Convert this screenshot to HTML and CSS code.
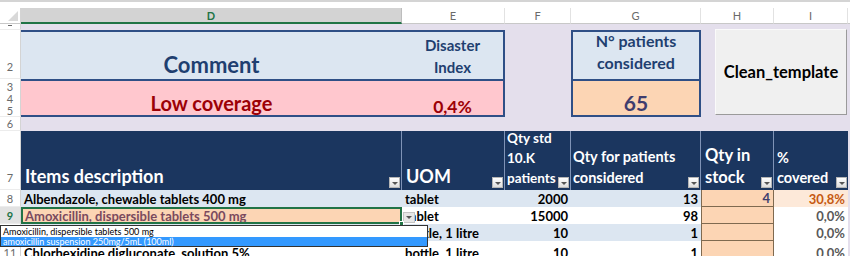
FILE: index.html
```html
<!DOCTYPE html>
<html lang="en">
<head>
<meta charset="utf-8">
<title>Sheet</title>
<link rel="stylesheet" href="styles.css">
</head>
<body>
<div class="app">
  <div class="chrome-top"></div>
  <div class="colheads">
    <div class="corner"><span class="corner-tri"></span></div>
    <div class="ch sel">D</div>
    <div class="ch">E</div>
    <div class="ch">F</div>
    <div class="ch">G</div>
    <div class="ch">H</div>
    <div class="ch">I</div>
    <div class="ch end"></div>
  </div>

  <div class="top">
    <div class="rn rn-one"><span class="rn-dash"></span></div>
    <div class="rn rn-pad">2</div>
    <div class="rn rn-stack"><span>3</span><span>4</span><span>5</span></div>
    <div class="rn">6</div>

    <div class="kpi">
      <div class="kc k-comment">Comment</div>
      <div class="kc k-index">Disaster<br>Index</div>
      <div class="kc k-low">Low coverage</div>
      <div class="kc k-val">0,4%</div>
    </div>

    <div class="pat">
      <div class="kc p-label">N° patients<br>considered</div>
      <div class="kc p-val">65</div>
    </div>

    <button class="clean">Clean_template</button>
  </div>

  <div class="table">
    <div class="rn rn-head">7</div>
    <div class="th th-items">Items description<span class="fb"></span></div>
    <div class="th th-uom">UOM<span class="fb"></span></div>
    <div class="th th-std">Qty std<br>10.K<br>patients<span class="fb"></span></div>
    <div class="th th-pat">Qty for patients<br>considered<span class="fb"></span></div>
    <div class="th th-stock">Qty in<br>stock<span class="fb"></span></div>
    <div class="th th-cov">%<br>covered<span class="fb"></span></div>
    <div class="gap"></div>

    <div class="rn">8</div>
    <div class="td blue">Albendazole, chewable tablets 400 mg</div>
    <div class="td blue">tablet</div>
    <div class="td blue num">2000</div>
    <div class="td blue num">13</div>
    <div class="td stock num">4</div>
    <div class="td pct hi num">30,8%</div>
    <div class="gap"></div>

    <div class="rn rn-sel">9</div>
    <div class="td selcell">Amoxicillin, dispersible tablets 500 mg</div>
    <div class="td white">tablet</div>
    <div class="td white num">15000</div>
    <div class="td white num">98</div>
    <div class="td stock num"></div>
    <div class="td pct num">0,0%</div>
    <div class="gap"></div>

    <div class="rn rn-hidden"></div>
    <div class="td blue"></div>
    <div class="td blue">bottle, 1 litre</div>
    <div class="td blue num">10</div>
    <div class="td blue num">1</div>
    <div class="td stock num"></div>
    <div class="td pct num">0,0%</div>
    <div class="gap"></div>

    <div class="rn rn-low">11</div>
    <div class="td white low">Chlorhexidine digluconate, solution 5%</div>
    <div class="td white low">bottle, 1 litre</div>
    <div class="td white num low">10</div>
    <div class="td white num low">1</div>
    <div class="td stock num"></div>
    <div class="td pct num low">0,0%</div>
    <div class="gap"></div>

    <span class="dd-arrow"></span>
    <span class="fill-handle"></span>
    <div class="dd">
      <div class="opt">Amoxicillin, dispersible tablets 500 mg</div>
      <div class="opt opt-hl">amoxicillin suspension 250mg/5mL (100ml)</div>
    </div>
  </div>
</div>
</body>
</html>
```

FILE: styles.css
```css
:root {
  --cols: 21px 381px 103px 66px 130px 73px 74px 2px;
  --navy: #1b365f;
  --lav: #e4dfec;
  --lblue: #dce6f1;
  --pink: #ffc7ce;
  --orange: #fcd5b4;
  --kborder: #2f4f86;
}

* { box-sizing: border-box; }

html, body {
  margin: 0;
  padding: 0;
}

body {
  width: 850px;
  height: 256px;
  overflow: hidden;
  background: #fff;
  font-family: Lato, "Liberation Sans", sans-serif;
}

.chrome-top {
  height: 2px;
  background: #d4d4d4;
  margin-bottom: 6px;
}

/* column headers */
.colheads {
  display: grid;
  grid-template-columns: var(--cols);
  height: 16px;
}

.corner {
  position: relative;
  background: #fff;
  border-right: 1px solid #d4d4d4;
  border-bottom: 1px solid #c8c8c8;
}

.corner-tri {
  position: absolute;
  right: 2px;
  bottom: 2px;
  width: 0;
  height: 0;
  border-left: 10px solid transparent;
  border-bottom: 10px solid #d9d9d9;
}

.ch {
  display: flex;
  align-items: center;
  justify-content: center;
  font-size: 11px;
  color: #6a6a6a;
  background: #fff;
  border-right: 1px solid #e2e2e2;
  border-bottom: 1px solid #c8c8c8;
}

.ch.sel {
  background: #d3d3d3;
  color: #217346;
  font-weight: bold;
  border-right: 1px solid #bdbdbd;
  border-bottom: 2px solid #217346;
}

.ch.end { border-right: 0; }

/* row number column */
.rn {
  grid-column: 1;
  display: flex;
  align-items: center;
  justify-content: center;
  background: #fff;
  color: #6a6a6a;
  font-size: 11px;
  line-height: 1;
  border-right: 1px solid #d4d4d4;
  border-bottom: 1px solid #ececec;
  overflow: hidden;
}

.rn-one { align-items: flex-end; padding-bottom: 3px; }

.rn-dash {
  width: 4px;
  height: 1px;
  background: #6a6a6a;
}

.rn-pad {
  align-items: flex-end;
  padding-bottom: 6px;
}

.rn-stack {
  flex-direction: column;
  justify-content: space-around;
  padding-top: 1px;
}

.rn-head {
  align-items: flex-end;
  padding-bottom: 6px;
}

.rn-sel {
  color: #217346;
  font-weight: bold;
  background: #e2e2e2;
}

.rn-low { align-items: flex-start; padding-top: 6px; }

/* top summary */
.top {
  display: grid;
  grid-template-columns: var(--cols);
  grid-template-rows: 6px 49px 38px 14px;
  background: var(--lav);
}

.kpi {
  grid-column: 2 / 4;
  grid-row: 2 / 4;
  display: grid;
  grid-template-columns: 381px 1fr;
  grid-template-rows: 47px 1fr;
  border: 2px solid var(--kborder);
  border-left: 0;
}

.kc {
  display: flex;
  flex-direction: column;
  justify-content: flex-end;
  align-items: center;
  text-align: center;
  font-weight: bold;
}

.k-comment {
  background: var(--lblue);
  color: #1f3f70;
  font-size: 22px;
  line-height: 1;
  padding-bottom: 3px;
}

.k-index {
  background: var(--lblue);
  color: #1f3f70;
  font-size: 15px;
  line-height: 22px;
  padding-bottom: 1px;
}

.k-low {
  background: var(--pink);
  color: #9c0006;
  font-size: 20px;
  line-height: 1;
  padding-bottom: 2px;
  border-top: 2px solid var(--kborder);
}

.k-val {
  background: var(--pink);
  color: #9c0006;
  font-size: 17.5px;
  line-height: 1;
  padding-bottom: 0;
  border-top: 2px solid var(--kborder);
}

.pat {
  grid-column: 5;
  grid-row: 2 / 4;
  display: grid;
  grid-template-rows: 47px 1fr;
  border: 2px solid var(--kborder);
}

.p-label {
  background: var(--lblue);
  color: #1f3f70;
  font-size: 16px;
  line-height: 22px;
  padding-bottom: 5px;
}

.p-val {
  background: var(--orange);
  color: #3f3d6e;
  font-size: 21px;
  line-height: 1;
  padding-bottom: 2px;
  border-top: 2px solid var(--kborder);
}

.clean {
  grid-column: 6 / 9;
  grid-row: 2 / 4;
  margin: -1px 3px 2px 14px;
  padding: 0 0 1px 0;
  background: #f0f0f0;
  border: 1px solid;
  border-color: #fafafa #9a9a9a #9a9a9a #fafafa;
  font-family: Lato, "Liberation Sans", sans-serif;
  font-weight: bold;
  font-size: 16.5px;
  color: #000;
}

/* table */
.table {
  position: relative;
  display: grid;
  grid-template-columns: var(--cols);
  grid-template-rows: 59px repeat(4, 17px);
  background: var(--lav);
}

.th {
  position: relative;
  display: flex;
  flex-direction: column;
  justify-content: flex-end;
  background: var(--navy);
  color: #fff;
  font-weight: bold;
  border-right: 1px solid #7f93b6;
  white-space: nowrap;
}

.th-items { font-size: 18px; line-height: 1; padding: 0 0 5px 4px; }
.th-uom { font-size: 18px; line-height: 1; padding: 0 0 5px 4px; }
.th-std { font-size: 13.5px; line-height: 20px; padding: 0 0 2px 2px; }
.th-pat { font-size: 14.5px; line-height: 21px; padding: 0 0 2px 2px; }
.th-stock { font-size: 16.5px; line-height: 22px; padding: 0 0 2px 4px; }
.th-cov { font-size: 14.5px; line-height: 20px; padding: 0 0 2px 3px; border-right: 0; }

.fb {
  position: absolute;
  right: 1px;
  bottom: 2px;
  width: 11px;
  height: 11px;
  background: linear-gradient(#ffffff, #dedede);
  border: 1px solid #b5b5b5;
}

.fb::after {
  content: "";
  position: absolute;
  left: 2px;
  top: 4px;
  border-left: 3px solid transparent;
  border-right: 3px solid transparent;
  border-top: 3px solid #555;
}

.gap { background: var(--lav); }

.td {
  display: flex;
  align-items: center;
  padding: 0 3px;
  font-size: 13px;
  font-weight: bold;
  color: #000;
  white-space: nowrap;
  overflow: hidden;
}

.td.low { align-items: flex-start; padding-top: 6px; line-height: 12px; }

.num { justify-content: flex-end; }
.blue { background: var(--lblue); }
.white { background: #fff; }

.selcell {
  background: var(--orange);
  color: #7a4a5e;
  border: 2px solid #217346;
  padding-left: 2px;
}

.stock {
  background: var(--orange);
  color: #3f3d6e;
  border-left: 1px solid #7f6a50;
  border-right: 1px solid #7f6a50;
  border-bottom: 1px solid #7f6a50;
}

.pct {
  background: #fff;
  color: #595959;
}

.pct.hi {
  background: #fde9d9;
  color: #c65911;
}

.dd-arrow {
  position: absolute;
  left: 403px;
  top: 81px;
  width: 12px;
  height: 11px;
  background: #e6e6e6;
  border: 1px solid #c4c4c4;
}

.dd-arrow::after {
  content: "";
  position: absolute;
  left: 2px;
  top: 3px;
  border-left: 3px solid transparent;
  border-right: 3px solid transparent;
  border-top: 3px solid #555;
}

.fill-handle {
  position: absolute;
  left: 399px;
  top: 90px;
  width: 5px;
  height: 5px;
  background: #217346;
  border: 1px solid #fff;
}

.dd {
  position: absolute;
  left: 0;
  top: 94px;
  width: 428px;
  height: 22px;
  background: #fff;
  border: 1px solid #333;
  font-family: Lato, "Liberation Sans", sans-serif;
  font-size: 9px;
  color: #000;
}

.opt {
  height: 11px;
  line-height: 11px;
  padding-left: 2px;
  white-space: nowrap;
}

.opt-hl {
  height: 9px;
  line-height: 9px;
  background: #3399ff;
  color: #fff;
}
```
